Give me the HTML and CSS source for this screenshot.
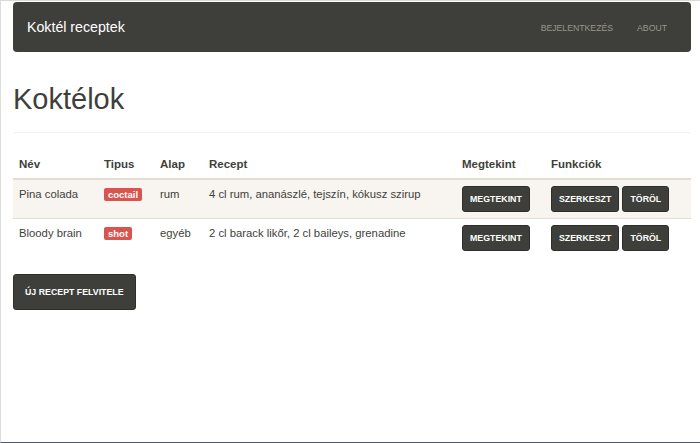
FILE: index.html
```html
<!DOCTYPE html>
<html lang="hu">
<head>
<meta charset="utf-8">
<title>Koktél receptek</title>
<link rel="stylesheet" href="styles.css">
</head>
<body>
<div class="page">
  <nav class="navbar">
    <a class="brand" href="#">Koktél receptek</a>
    <ul class="nav">
      <li><a href="#">Bejelentkezés</a></li>
      <li><a href="#">About</a></li>
    </ul>
  </nav>

  <div class="page-header">
    <h1>Koktélok</h1>
  </div>

  <table class="table">
    <colgroup>
      <col class="c-name"><col class="c-type"><col class="c-base"><col class="c-recipe"><col class="c-view"><col class="c-func">
    </colgroup>
    <thead>
      <tr>
        <th>Név</th>
        <th>Tipus</th>
        <th>Alap</th>
        <th>Recept</th>
        <th>Megtekint</th>
        <th>Funkciók</th>
      </tr>
    </thead>
    <tbody>
      <tr class="striped">
        <td>Pina colada</td>
        <td><span class="label">coctail</span></td>
        <td>rum</td>
        <td>4 cl rum, ananászlé, tejszín, kókusz szirup</td>
        <td><a class="btn" href="#">Megtekint</a></td>
        <td><a class="btn" href="#">Szerkeszt</a> <a class="btn" href="#">Töröl</a></td>
      </tr>
      <tr>
        <td>Bloody brain</td>
        <td><span class="label">shot</span></td>
        <td>egyéb</td>
        <td>2 cl barack likőr, 2 cl baileys, grenadine</td>
        <td><a class="btn" href="#">Megtekint</a></td>
        <td><a class="btn" href="#">Szerkeszt</a> <a class="btn" href="#">Töröl</a></td>
      </tr>
    </tbody>
  </table>

  <a class="btn btn-lg" href="#">Új recept felvitele</a>
</div>
</body>
</html>
```
FILE: styles.css
```css
* { box-sizing: border-box; }

html, body {
  margin: 0;
  height: 100%;
}

body {
  font-family: "Liberation Sans", Arial, sans-serif;
  font-size: 11.3px;
  line-height: 1.43;
  color: #3e3f3a;
  background: #fff;
  border-top: 1px solid #d9d9d9;
  border-left: 1px solid #dcdcdc;
  border-bottom: 1px solid #565668;
}

.page {
  padding: 1px 9px 0 12px;
}

.navbar {
  height: 50px;
  background: #3e3f3a;
  border-radius: 4px;
  display: flex;
  align-items: center;
  justify-content: space-between;
  padding: 0 12px 0 14px;
}

.brand {
  color: #fff;
  text-decoration: none;
  font-size: 14.2px;
  line-height: 20px;
}

.nav {
  list-style: none;
  margin: 0;
  padding: 0;
  display: flex;
  padding-top: 2px;
}

.nav a {
  display: block;
  padding: 0 12px;
  color: #98978b;
  text-decoration: none;
  text-transform: uppercase;
  font-size: 8.7px;
  line-height: 14px;
}

.page-header {
  margin: 32px 0 17px;
  padding-bottom: 16px;
  border-bottom: 1px solid #f6f3ee;
}

.page-header h1 {
  margin: 0;
  font-size: 29px;
  font-weight: normal;
  line-height: 1.1;
  color: #3e3f3a;
}

.table {
  width: 100%;
  border-collapse: collapse;
  table-layout: fixed;
  margin-bottom: 17px;
}

.c-name { width: 85px; }
.c-type { width: 56px; }
.c-base { width: 49px; }
.c-recipe { width: 253px; }
.c-view { width: 89px; }
.c-func { width: auto; }

.table th,
.table td {
  padding: 6px;
  text-align: left;
  vertical-align: top;
}

.table th {
  font-size: 11.5px;
  font-weight: bold;
  border-bottom: 2px solid #e3ddd2;
}

.table tbody tr + tr td {
  border-top: 1px solid #e3ddd2;
}

.striped td {
  background: #f8f5f0;
}

.label {
  display: inline-block;
  background: #d9534f;
  color: #fff;
  font-weight: bold;
  font-size: 9.5px;
  line-height: 10px;
  padding: 2px 4px 1px;
  border-radius: 2px;
  margin-top: 1px;
}

.btn {
  display: inline-block;
  background: #3e3f3a;
  border: 1px solid #2e2f2b;
  border-radius: 3px;
  color: #fff;
  text-decoration: none;
  text-transform: uppercase;
  font-weight: bold;
  font-size: 8.8px;
  line-height: 12px;
  padding: 6px 7px;
}

.btn-lg {
  padding: 11px 11px;
}
```
